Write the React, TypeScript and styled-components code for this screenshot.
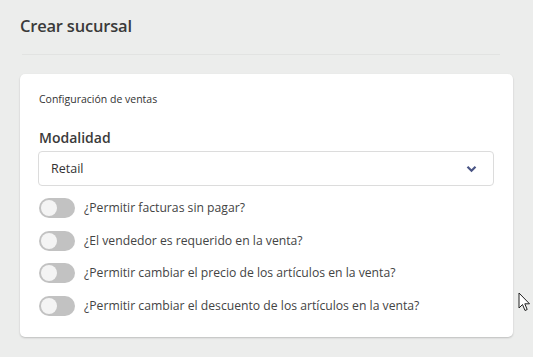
import React from "react";
import styled, { createGlobalStyle } from "styled-components";

const Global = createGlobalStyle`
  html, body { margin: 0; padding: 0; background: #ecedec; }
  body { font-family: "Open Sans", "Noto Sans", sans-serif; color: #333; }
  * { box-sizing: border-box; }
`;

const Page = styled.div`
  position: relative;
  width: 533px;
  height: 357px;
  padding: 15px 20px 0 20px;
  overflow: hidden;
`;

const Title = styled.h1`
  margin: 0;
  font-size: 16.5px;
  font-weight: 600;
  color: #3a3a3a;
  line-height: 22px;
  letter-spacing: -0.2px;
`;

const Divider = styled.hr`
  margin: 17px 13px 0 2px;
  border: 0;
  border-top: 1px solid #e2e3e2;
`;

const Card = styled.section`
  margin-top: 19px;
  width: 493px;
  height: 263px;
  background: #fff;
  border-radius: 5px;
  box-shadow: 0 1px 2px rgba(0, 0, 0, 0.2);
  padding: 17px 19px 0 19px;
  display: flex;
  flex-direction: column;
`;

const CardTitle = styled.div`
  font-size: 10.5px;
  color: #333;
  line-height: 16px;
`;

const FieldLabel = styled.label`
  margin-top: 21px;
  font-size: 14px;
  font-weight: 600;
  color: #3a3a3a;
  line-height: 20px;
`;

const Select = styled.div`
  margin-top: 3px;
  height: 35px;
  width: 456px;
  margin-left: -1px;
  border: 1px solid #dcdcdc;
  border-radius: 4px;
  display: flex;
  align-items: center;
  justify-content: space-between;
  padding: 0 16px 0 12px;
  font-size: 12.5px;
  color: #333;
`;

const Options = styled.div`
  margin-top: 12px;
  display: flex;
  flex-direction: column;
  gap: 12.5px;
`;

const Row = styled.div`
  display: flex;
  align-items: center;
  gap: 9px;
  height: 20px;
`;

const Track = styled.span<{ $on?: boolean }>`
  position: relative;
  width: 36px;
  height: 20px;
  border-radius: 10px;
  background: ${(p) => (p.$on ? "#4a5a8a" : "#c2c2c2")};
  flex: none;
`;

const Knob = styled.span<{ $on?: boolean }>`
  position: absolute;
  top: 2px;
  left: ${(p) => (p.$on ? "18px" : "2px")};
  width: 16px;
  height: 16px;
  border-radius: 50%;
  background: #f4f4f4;
`;

const RowLabel = styled.span`
  font-size: 12.2px;
  color: #444;
  line-height: 16px;
`;

const Cursor = styled.svg`
  position: absolute;
  left: 518px;
  top: 292px;
`;

const options = [
  "¿Permitir facturas sin pagar?",
  "¿El vendedor es requerido en la venta?",
  "¿Permitir cambiar el precio de los artículos en la venta?",
  "¿Permitir cambiar el descuento de los artículos en la venta?",
];

export default function App() {
  return (
    <Page>
      <Global />
      <Title>Crear sucursal</Title>
      <Divider />
      <Card>
        <CardTitle>Configuración de ventas</CardTitle>
        <FieldLabel>Modalidad</FieldLabel>
        <Select>
          <span>Retail</span>
          <svg width="11" height="8" viewBox="0 0 11 8">
            <path d="M1.5 1.8 L5.5 5.8 L9.5 1.8" fill="none" stroke="#4a5585" strokeWidth="2.2" />
          </svg>
        </Select>
        <Options>
          {options.map((o) => (
            <Row key={o}>
              <Track>
                <Knob />
              </Track>
              <RowLabel>{o}</RowLabel>
            </Row>
          ))}
        </Options>
      </Card>
      <Cursor width="13" height="20" viewBox="0 0 13 20">
        <path d="M1 1 L1 16 L4.5 12.5 L7 18.5 L9.2 17.5 L6.8 11.8 L11.5 11.8 Z" fill="#fff" stroke="#222" strokeWidth="1" strokeLinejoin="round" />
      </Cursor>
    </Page>
  );
}
